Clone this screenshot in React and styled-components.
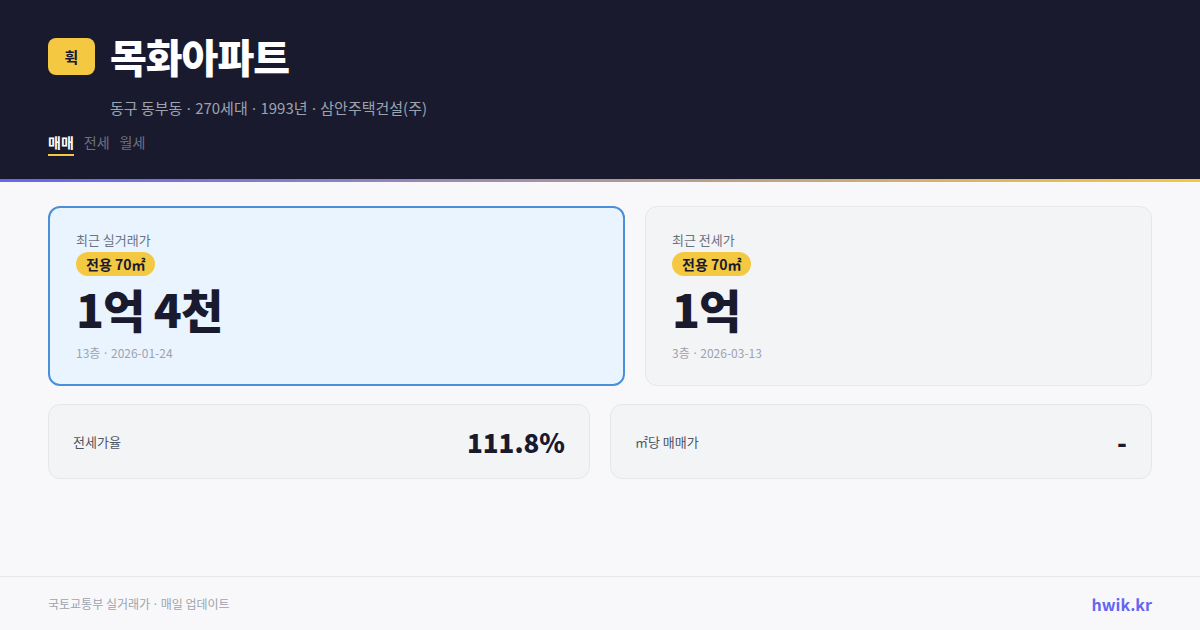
import React from 'react'
import styled, { createGlobalStyle } from 'styled-components'

const GlobalStyle = createGlobalStyle`
  html, body {
    margin: 0;
    padding: 0;
    background: #f8f8fa;
    font-family: "Noto Sans CJK KR", "Noto Sans", sans-serif;
  }
  * { box-sizing: border-box; }
`

const Page = styled.div`
  width: 1200px;
  height: 630px;
  display: flex;
  flex-direction: column;
  background: #f8f8fa;
  overflow: hidden;
`

const Header = styled.header`
  background: #1a1a2e;
  padding: 34px 48px 0;
  height: 182px;
  flex-shrink: 0;
  border-bottom: 3px solid transparent;
  border-image: linear-gradient(90deg, #6366f1, #f5c842) 1;
`

const TitleRow = styled.div`
  display: flex;
  align-items: center;
  gap: 15px;
`

const Logo = styled.div`
  width: 47px;
  height: 37px;
  border-radius: 8px;
  background: #f5c842;
  color: #1a1a2e;
  font-size: 15px;
  font-weight: 700;
  display: flex;
  align-items: center;
  justify-content: center;
`

const Title = styled.h1`
  margin: 0;
  color: #ffffff;
  font-size: 40px;
  font-weight: 900;
  letter-spacing: -1px;
  line-height: 44px;
`

const Meta = styled.div`
  margin: 20px 0 0 62px;
  color: #9ca3af;
  font-size: 15px;
  line-height: 20px;
`

const Dot = styled.span`
  font-family: "Noto Sans", sans-serif;
  margin: 0 1px;
`

const Tabs = styled.div`
  display: flex;
  gap: 10px;
  margin-top: 14px;
`

const Tab = styled.span`
  font-size: 14px;
  line-height: 20px;
  padding-bottom: 2px;
  font-weight: ${p => (p.$active ? 700 : 400)};
  color: ${p => (p.$active ? '#ffffff' : '#6b7280')};
  border-bottom: 2px solid ${p => (p.$active ? '#f5c842' : 'transparent')};
`

const Main = styled.main`
  flex: 1;
  padding: 24px 48px 0;
  display: flex;
  flex-direction: column;
  gap: 18px;
`

const TopGrid = styled.div`
  display: grid;
  grid-template-columns: 577fr 507fr;
  gap: 20px;
`

const PriceCard = styled.div`
  height: 180px;
  border-radius: 12px;
  padding: ${p => (p.$highlight ? '22px 26px' : '23px 26px')};
  background: ${p => (p.$highlight ? '#eaf4ff' : '#f3f4f6')};
  border: ${p => (p.$highlight ? '2px solid #4a90d9' : '1px solid #e5e7eb')};
`

const CardLabel = styled.div`
  font-size: 13px;
  line-height: 20px;
  color: #6b7280;
`

const Pill = styled.span`
  display: inline-block;
  margin-top: 2px;
  padding: 1px 10px;
  border-radius: 12px;
  background: #f5c842;
  color: #1a1a2e;
  font-size: 14px;
  font-weight: 700;
  line-height: 22px;
`

const Price = styled.div`
  margin-top: 2px;
  font-size: 46px;
  font-weight: 900;
  color: #1a1a2e;
  letter-spacing: -1px;
  line-height: 60px;
`

const Sub = styled.div`
  margin-top: 7px;
  font-size: 12px;
  line-height: 16px;
  color: #9ca3af;
`

const BottomGrid = styled.div`
  display: grid;
  grid-template-columns: 1fr 1fr;
  gap: 20px;
`

const StatCard = styled.div`
  height: 75px;
  border-radius: 12px;
  background: #f3f4f6;
  border: 1px solid #e5e7eb;
  padding: 0 24px;
  display: flex;
  align-items: center;
  justify-content: space-between;
`

const StatLabel = styled.span`
  font-size: 13px;
  color: #4b5563;
`

const StatValue = styled.span`
  font-size: 26px;
  font-weight: 800;
  color: #1a1a2e;
`

const Footer = styled.footer`
  height: 54px;
  border-top: 1px solid #e5e7eb;
  padding: 0 48px;
  display: flex;
  align-items: center;
  justify-content: space-between;
`

const Source = styled.span`
  font-size: 12px;
  color: #9ca3af;
`

const Brand = styled.span`
  font-size: 16px;
  font-weight: 700;
  color: #6366f1;
`

const App = () => {
  return (
    <Page>
      <GlobalStyle />
      <Header>
        <TitleRow>
          <Logo>휙</Logo>
          <Title>목화아파트</Title>
        </TitleRow>
        <Meta>
          동구 동부동 <Dot>·</Dot> 270세대 <Dot>·</Dot> 1993년 <Dot>·</Dot> 삼안주택건설(주)
        </Meta>
        <Tabs>
          <Tab $active>매매</Tab>
          <Tab>전세</Tab>
          <Tab>월세</Tab>
        </Tabs>
      </Header>
      <Main>
        <TopGrid>
          <PriceCard $highlight>
            <CardLabel>최근 실거래가</CardLabel>
            <Pill>전용 70㎡</Pill>
            <Price>1억 4천</Price>
            <Sub>13층 <Dot>·</Dot> 2026-01-24</Sub>
          </PriceCard>
          <PriceCard>
            <CardLabel>최근 전세가</CardLabel>
            <Pill>전용 70㎡</Pill>
            <Price>1억</Price>
            <Sub>3층 <Dot>·</Dot> 2026-03-13</Sub>
          </PriceCard>
        </TopGrid>
        <BottomGrid>
          <StatCard>
            <StatLabel>전세가율</StatLabel>
            <StatValue>111.8%</StatValue>
          </StatCard>
          <StatCard>
            <StatLabel>㎡당 매매가</StatLabel>
            <StatValue>-</StatValue>
          </StatCard>
        </BottomGrid>
      </Main>
      <Footer>
        <Source>국토교통부 실거래가 <Dot>·</Dot> 매일 업데이트</Source>
        <Brand>hwik.kr</Brand>
      </Footer>
    </Page>
  )
}

export default App
